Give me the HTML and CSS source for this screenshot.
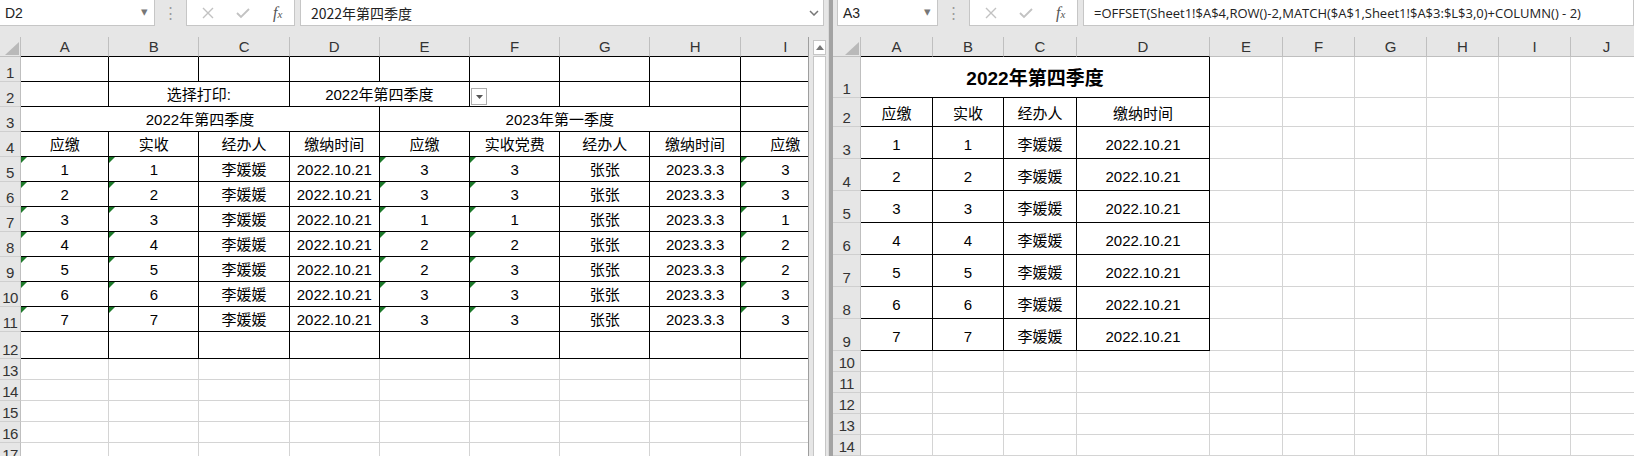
FILE: index.html
```html
<!DOCTYPE html>
<html lang="zh-CN">
<head>
  <meta charset="UTF-8" />
  <title>Sheet</title>
  <link rel="stylesheet" href="styles.css">
</head>
<body>
  <div class="pane pane-left">
    <div class="fbar">
      <div class="namebox name-left">D2<span class="nb-arrow">&#9662;</span></div>
      <div class="dots">&#8942;</div>
      <div class="fx-box">
        <svg class="ico" width="14" height="14" viewBox="0 0 14 14"><path d="M2 2 L12 12 M12 2 L2 12" stroke="#c2c2c2" stroke-width="1.4" fill="none"/></svg>
        <svg class="ico" width="16" height="14" viewBox="0 0 16 14"><path d="M2 7 L6 11 L14 3" stroke="#c2c2c2" stroke-width="1.8" fill="none"/></svg>
        <span class="fx">f<small>x</small></span>
      </div>
      <div class="finput">2022年第四季度<svg class="fi-arrow" width="10" height="6" viewBox="0 0 10 6"><path d="M1 1 L5 5 L9 1" stroke="#777" stroke-width="1.5" fill="none"/></svg></div>
    </div>
    <div class="sheet-area">
      <div class="clip">
        <table class="sheet">
          <colgroup>
            <col style="width:21px"><col style="width:88px"><col style="width:90px"><col style="width:90px"><col style="width:90px">
            <col style="width:90px"><col style="width:90px"><col style="width:90px"><col style="width:90px"><col style="width:90px">
          </colgroup>
          <tr class="h20">
            <th class="corner"><svg width="18" height="16" viewBox="0 0 18 16"><polygon points="17,2 17,15 3,15" fill="#b9b9b9"/></svg></th>
            <th class="ch bk">A</th><th class="ch bk">B</th><th class="ch bk">C</th><th class="ch bk">D</th><th class="ch bk">E</th><th class="ch bk">F</th><th class="ch bk">G</th><th class="ch bk">H</th><th class="ch bk">I</th>
          </tr>
          <tr class="h25">
            <th class="rh">1</th>
            <td class="b"></td><td class="b"></td><td class="b"></td><td class="b"></td><td class="b"></td><td class="b"></td><td class="b"></td><td class="b"></td><td class="b"></td>
          </tr>
          <tr class="h25">
            <th class="rh">2</th>
            <td class="b"></td><td class="b" colspan="2">选择打印:</td><td class="b" colspan="2">2022年第四季度</td>
            <td class="b dd-cell"><span class="dd-btn"><svg width="7" height="4" viewBox="0 0 7 4"><polygon points="0,0 7,0 3.5,4" fill="#555"/></svg></span></td>
            <td class="b"></td><td class="b"></td><td class="b"></td>
          </tr>
          <tr class="h25">
            <th class="rh">3</th>
            <td class="b" colspan="4">2022年第四季度</td><td class="b" colspan="4">2023年第一季度</td><td class="b"></td>
          </tr>
          <tr class="h25">
            <th class="rh">4</th>
            <td class="b">应缴</td><td class="b">实收</td><td class="b">经办人</td><td class="b">缴纳时间</td><td class="b">应缴</td><td class="b">实收党费</td><td class="b">经办人</td><td class="b">缴纳时间</td><td class="b">应缴</td>
          </tr>
          <tr class="h25">
            <th class="rh">5</th>
            <td class="b t">1</td><td class="b t">1</td><td class="b">李媛媛</td><td class="b">2022.10.21</td><td class="b t">3</td><td class="b t">3</td><td class="b">张张</td><td class="b">2023.3.3</td><td class="b t">3</td>
          </tr>
          <tr class="h25">
            <th class="rh">6</th>
            <td class="b t">2</td><td class="b t">2</td><td class="b">李媛媛</td><td class="b">2022.10.21</td><td class="b t">3</td><td class="b t">3</td><td class="b">张张</td><td class="b">2023.3.3</td><td class="b t">3</td>
          </tr>
          <tr class="h25">
            <th class="rh">7</th>
            <td class="b t">3</td><td class="b t">3</td><td class="b">李媛媛</td><td class="b">2022.10.21</td><td class="b t">1</td><td class="b t">1</td><td class="b">张张</td><td class="b">2023.3.3</td><td class="b t">1</td>
          </tr>
          <tr class="h25">
            <th class="rh">8</th>
            <td class="b t">4</td><td class="b t">4</td><td class="b">李媛媛</td><td class="b">2022.10.21</td><td class="b t">2</td><td class="b t">2</td><td class="b">张张</td><td class="b">2023.3.3</td><td class="b t">2</td>
          </tr>
          <tr class="h25">
            <th class="rh">9</th>
            <td class="b t">5</td><td class="b t">5</td><td class="b">李媛媛</td><td class="b">2022.10.21</td><td class="b t">2</td><td class="b t">3</td><td class="b">张张</td><td class="b">2023.3.3</td><td class="b t">2</td>
          </tr>
          <tr class="h25">
            <th class="rh">10</th>
            <td class="b t">6</td><td class="b t">6</td><td class="b">李媛媛</td><td class="b">2022.10.21</td><td class="b t">3</td><td class="b t">3</td><td class="b">张张</td><td class="b">2023.3.3</td><td class="b t">3</td>
          </tr>
          <tr class="h25">
            <th class="rh">11</th>
            <td class="b t">7</td><td class="b t">7</td><td class="b">李媛媛</td><td class="b">2022.10.21</td><td class="b t">3</td><td class="b t">3</td><td class="b">张张</td><td class="b">2023.3.3</td><td class="b t">3</td>
          </tr>
          <tr class="h27">
            <th class="rh">12</th>
            <td class="b"></td><td class="b"></td><td class="b"></td><td class="b"></td><td class="b"></td><td class="b"></td><td class="b"></td><td class="b"></td><td class="b"></td>
          </tr>
          <tr class="h21"><th class="rh">13</th><td></td><td></td><td></td><td></td><td></td><td></td><td></td><td></td><td></td></tr>
          <tr class="h21"><th class="rh">14</th><td></td><td></td><td></td><td></td><td></td><td></td><td></td><td></td><td></td></tr>
          <tr class="h21"><th class="rh">15</th><td></td><td></td><td></td><td></td><td></td><td></td><td></td><td></td><td></td></tr>
          <tr class="h21"><th class="rh">16</th><td></td><td></td><td></td><td></td><td></td><td></td><td></td><td></td><td></td></tr>
          <tr class="h21"><th class="rh">17</th><td></td><td></td><td></td><td></td><td></td><td></td><td></td><td></td><td></td></tr>
        </table>
      </div>
      <div class="vscroll">
        <div class="sb-up"><svg width="8" height="5" viewBox="0 0 8 5"><polygon points="0,5 8,5 4,0" fill="#777"/></svg></div>
        <div class="sb-track"></div>
      </div>
    </div>
  </div>

  <div class="split"></div>

  <div class="pane pane-right">
    <div class="fbar fbar-right">
      <div class="namebox name-right">A3<span class="nb-arrow">&#9662;</span></div>
      <div class="dots">&#8942;</div>
      <div class="fx-box">
        <svg class="ico" width="14" height="14" viewBox="0 0 14 14"><path d="M2 2 L12 12 M12 2 L2 12" stroke="#c2c2c2" stroke-width="1.4" fill="none"/></svg>
        <svg class="ico" width="16" height="14" viewBox="0 0 16 14"><path d="M2 7 L6 11 L14 3" stroke="#c2c2c2" stroke-width="1.8" fill="none"/></svg>
        <span class="fx">f<small>x</small></span>
      </div>
      <div class="finput formula">=OFFSET(Sheet1!$A$4,ROW()-2,MATCH($A$1,Sheet1!$A$3:$L$3,0)+COLUMN() - 2)</div>
    </div>
    <div class="sheet-area">
      <div class="clip">
        <table class="sheet sheet-right">
          <colgroup>
            <col style="width:28px"><col style="width:72px"><col style="width:71px"><col style="width:73px"><col style="width:133px">
            <col style="width:73px"><col style="width:72px"><col style="width:72px"><col style="width:72px"><col style="width:72px"><col style="width:72px">
          </colgroup>
          <tr class="h20">
            <th class="corner"><svg width="24" height="16" viewBox="0 0 24 16"><polygon points="23,2 23,15 9,15" fill="#b9b9b9"/></svg></th>
            <th class="ch bk">A</th><th class="ch bk">B</th><th class="ch bk">C</th><th class="ch bk">D</th><th class="ch">E</th><th class="ch">F</th><th class="ch">G</th><th class="ch">H</th><th class="ch">I</th><th class="ch">J</th>
          </tr>
          <tr class="h41">
            <th class="rh">1</th>
            <td class="b title" colspan="4">2022年第四季度</td><td></td><td></td><td></td><td></td><td></td><td></td>
          </tr>
          <tr class="h29">
            <th class="rh">2</th>
            <td class="b">应缴</td><td class="b">实收</td><td class="b">经办人</td><td class="b">缴纳时间</td><td></td><td></td><td></td><td></td><td></td><td></td>
          </tr>
          <tr class="h32"><th class="rh">3</th><td class="b">1</td><td class="b">1</td><td class="b">李媛媛</td><td class="b">2022.10.21</td><td></td><td></td><td></td><td></td><td></td><td></td></tr>
          <tr class="h32"><th class="rh">4</th><td class="b">2</td><td class="b">2</td><td class="b">李媛媛</td><td class="b">2022.10.21</td><td></td><td></td><td></td><td></td><td></td><td></td></tr>
          <tr class="h32"><th class="rh">5</th><td class="b">3</td><td class="b">3</td><td class="b">李媛媛</td><td class="b">2022.10.21</td><td></td><td></td><td></td><td></td><td></td><td></td></tr>
          <tr class="h32"><th class="rh">6</th><td class="b">4</td><td class="b">4</td><td class="b">李媛媛</td><td class="b">2022.10.21</td><td></td><td></td><td></td><td></td><td></td><td></td></tr>
          <tr class="h32"><th class="rh">7</th><td class="b">5</td><td class="b">5</td><td class="b">李媛媛</td><td class="b">2022.10.21</td><td></td><td></td><td></td><td></td><td></td><td></td></tr>
          <tr class="h32"><th class="rh">8</th><td class="b">6</td><td class="b">6</td><td class="b">李媛媛</td><td class="b">2022.10.21</td><td></td><td></td><td></td><td></td><td></td><td></td></tr>
          <tr class="h32"><th class="rh">9</th><td class="b">7</td><td class="b">7</td><td class="b">李媛媛</td><td class="b">2022.10.21</td><td></td><td></td><td></td><td></td><td></td><td></td></tr>
          <tr class="h21"><th class="rh">10</th><td></td><td></td><td></td><td></td><td></td><td></td><td></td><td></td><td></td><td></td></tr>
          <tr class="h21"><th class="rh">11</th><td></td><td></td><td></td><td></td><td></td><td></td><td></td><td></td><td></td><td></td></tr>
          <tr class="h21"><th class="rh">12</th><td></td><td></td><td></td><td></td><td></td><td></td><td></td><td></td><td></td><td></td></tr>
          <tr class="h21"><th class="rh">13</th><td></td><td></td><td></td><td></td><td></td><td></td><td></td><td></td><td></td><td></td></tr>
          <tr class="h21"><th class="rh">14</th><td></td><td></td><td></td><td></td><td></td><td></td><td></td><td></td><td></td><td></td></tr>
        </table>
      </div>
    </div>
  </div>
</body>
</html>
```

FILE: styles.css
```css
:root {
  --ui-bg: #e6e6e6;
  --box-border: #c6c6c6;
  --grid: #d4d4d4;
  --cell-border: #000;
  --head-line: #bfbfbf;
  --cell-font: "Liberation Sans", "Noto Sans CJK SC", sans-serif;
}

html, body {
  margin: 0;
  height: 456px;
  overflow: hidden;
}

body {
  display: flex;
  background: var(--ui-bg);
  font-family: var(--cell-font);
  color: #000;
}

.pane {
  display: flex;
  flex-direction: column;
  height: 456px;
  overflow: hidden;
}

.pane-left {
  width: 828px;
  flex: none;
}

.pane-right {
  flex: 1;
  min-width: 0;
}

.split {
  width: 5px;
  flex: none;
  background: #a3a3a3;
  border-left: 1px solid #d9d9d9;
  box-sizing: border-box;
}

/* formula bar */
.fbar {
  display: flex;
  align-items: flex-start;
  height: 37px;
  flex: none;
  background: var(--ui-bg);
}

.fbar-right {
  padding-left: 4px;
}

.namebox,
.fx-box,
.finput {
  height: 27px;
  margin-top: -1px;
  box-sizing: border-box;
  background: #fff;
  border: 1px solid var(--box-border);
  display: flex;
  align-items: center;
  font-size: 14px;
  color: #222;
}

.namebox {
  position: relative;
  padding-left: 5px;
}

.name-left { width: 155px; border-left: none; }
.name-right { width: 101px; }

.nb-arrow {
  position: absolute;
  right: 6px;
  top: 4px;
  color: #777;
  font-size: 13px;
}

.dots {
  width: 31px;
  text-align: center;
  color: #9a9a9a;
  font-size: 15px;
  line-height: 26px;
}

.fx-box {
  width: 109px;
  padding-left: 14px;
  gap: 20px;
}

.fx {
  font-family: "Liberation Serif", serif;
  font-style: italic;
  font-size: 16px;
  color: #555;
  margin-left: 2px;
}

.fx small {
  font-size: 11px;
}

.finput {
  flex: 1;
  margin-left: 5px;
  padding-left: 10px;
  position: relative;
  font-family: "Noto Sans CJK SC", sans-serif;
}

.pane-left .finput {
  flex: none;
  width: 524px;
}

.fi-arrow {
  position: absolute;
  right: 4px;
  top: 10px;
}

.formula {
  font-family: "Open Sans", sans-serif;
  font-size: 13px;
  color: #222;
}

/* grid */
.sheet-area {
  display: flex;
  flex: 1;
  min-height: 0;
}

.clip {
  flex: 1;
  overflow: hidden;
  background: #fff;
}

.pane-left .clip {
  flex: none;
  width: 808px;
}

.sheet {
  border-collapse: separate;
  border-spacing: 0;
  table-layout: fixed;
  width: 831px;
}

.sheet-right {
  width: 810px;
}

.h20 { height: 20px; }
.h21 { height: 21px; }
.h25 { height: 25px; }
.h27 { height: 27px; }
.h29 { height: 29px; }
.h32 { height: 32px; }
.h41 { height: 41px; }

.sheet th {
  background: var(--ui-bg);
  font-weight: normal;
  color: #333;
  padding: 0;
  font-size: 15px;
  font-family: "Liberation Sans", sans-serif;
}

.corner {
  border-right: 1px solid var(--head-line);
  border-bottom: 1px solid var(--head-line);
  text-align: right;
  vertical-align: bottom;
  line-height: 0;
}

.ch {
  border-right: 1px solid var(--head-line);
  border-bottom: 1px solid var(--head-line);
  text-align: center;
  vertical-align: middle;
  line-height: 1;
}

.ch.bk {
  border-bottom-color: var(--cell-border);
}

.rh {
  border-right: 1px solid var(--head-line);
  border-bottom: 1px solid #cfcfcf;
  text-align: center;
  vertical-align: bottom;
  line-height: 1;
  padding-bottom: 1px !important;
  white-space: nowrap;
  letter-spacing: -0.5px;
}

.sheet td {
  position: relative;
  padding: 0 2px;
  border-right: 1px solid var(--grid);
  border-bottom: 1px solid var(--grid);
  text-align: center;
  vertical-align: middle;
  white-space: nowrap;
  overflow: hidden;
  font-size: 15px;
  line-height: 1;
  background: #fff;
}

.sheet td.b {
  border-right-color: var(--cell-border);
  border-bottom-color: var(--cell-border);
}

.sheet-right td.b {
  padding-top: 3px;
}

.sheet td.title {
  font-size: 19px;
  font-weight: bold;
  padding-top: 2px;
}

/* green error marker in top-left corner */
.sheet td.t::before {
  content: "";
  position: absolute;
  left: 0;
  top: 0;
  border-top: 6px solid #1d7a2a;
  border-right: 6px solid transparent;
}

.dd-btn {
  position: absolute;
  left: 1px;
  top: 6px;
  width: 16px;
  height: 17px;
  box-sizing: border-box;
  border: 1px solid #adadad;
  background: #fff;
  display: flex;
  align-items: center;
  justify-content: center;
}

/* scrollbar of left pane */
.vscroll {
  flex: 1;
  display: flex;
  flex-direction: column;
  padding: 3px 2px 0 4px;
  border-left: 1px solid #9e9e9e;
  background: var(--ui-bg);
}

.sb-up {
  height: 15px;
  box-sizing: border-box;
  border: 1px solid var(--box-border);
  background: #fff;
  display: flex;
  align-items: center;
  justify-content: center;
}

.sb-track {
  flex: 1;
  margin-top: 1px;
  border: 1px solid var(--box-border);
  border-bottom: none;
  background: #fff;
}
```
